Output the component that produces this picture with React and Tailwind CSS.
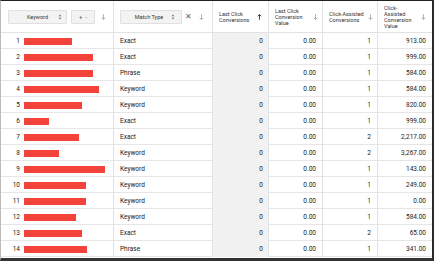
import React from "react";

const rows = [
  [48, "Exact", "0", "0.00", "1", "913.00"],
  [69, "Exact", "0", "0.00", "1", "999.00"],
  [69, "Phrase", "0", "0.00", "1", "584.00"],
  [75, "Keyword", "0", "0.00", "1", "584.00"],
  [58, "Keyword", "0", "0.00", "1", "820.00"],
  [25, "Exact", "0", "0.00", "1", "999.00"],
  [55, "Exact", "0", "0.00", "2", "2,217.00"],
  [35, "Keyword", "0", "0.00", "2", "3,267.00"],
  [81, "Keyword", "0", "0.00", "1", "143.00"],
  [62, "Keyword", "0", "0.00", "1", "249.00"],
  [62, "Keyword", "0", "0.00", "1", "0.00"],
  [52, "Keyword", "0", "0.00", "1", "584.00"],
  [58, "Exact", "0", "0.00", "2", "65.00"],
  [63, "Phrase", "0", "0.00", "1", "341.00"],
];

const Arrow = ({ up = false, dark = false }) => (
  <svg width="5" height="6" viewBox="0 0 5 6" className="shrink-0">
    {up ? (
      <path d="M2.5 0.5 L2.5 5.8 M0.7 2.3 L2.5 0.5 L4.3 2.3" stroke={dark ? "#333" : "#aaa"} strokeWidth="0.9" fill="none" />
    ) : (
      <path d="M2.5 0.2 L2.5 5.5 M0.7 3.7 L2.5 5.5 L4.3 3.7" stroke={dark ? "#333" : "#aaa"} strokeWidth="0.9" fill="none" />
    )}
  </svg>
);

const UpDown = () => (
  <svg width="4" height="6" viewBox="0 0 4 6" className="shrink-0">
    <path d="M0.5 2.3 L2 0.6 L3.5 2.3 Z M0.5 3.7 L2 5.4 L3.5 3.7 Z" fill="#777" />
  </svg>
);

const grid = "grid grid-cols-[112px_99px_56px_54px_55px_55px]";

export default function App() {
  return (
    <div
      className="w-[434px] h-[261px] overflow-hidden bg-white border-t border-t-[#222] border-r-2 border-r-[#2a2a2a] border-b-[3px] border-b-[#333] border-l border-l-[#bbb] text-[#222]"
      style={{ fontFamily: "Roboto, 'Liberation Sans', sans-serif" }}
    >
      <div className={`${grid} h-[32px] border-b border-[#e2e2e2] text-[5.5px] leading-[6px] text-[#333]`}>
        <div className="flex items-center pl-[7px]">
          <div className="w-[59px] h-[14px] bg-[#f3f3f3] border border-[#e0e0e0] rounded-[1px] flex items-center justify-center relative">
            <span>Keyword</span>
            <span className="absolute right-[4px] top-[3.5px]"><UpDown /></span>
          </div>
          <div className="ml-[4px] w-[24px] h-[14px] bg-[#f3f3f3] border border-[#e0e0e0] rounded-[1px] flex items-center justify-center gap-[3px] text-[6px] text-[#555]">
            <span className="text-[#555]">+</span><span className="text-[#555]">-</span>
          </div>
          <div className="ml-[6px]"><Arrow /></div>
        </div>
        <div className="flex items-center pl-[6px] border-l border-[#e2e2e2]">
          <div className="w-[62px] h-[14px] bg-[#f3f3f3] border border-[#e0e0e0] rounded-[1px] flex items-center justify-center relative">
            <span className="-ml-[4px]">Match Type</span>
            <span className="absolute right-[6px] top-[3.5px]"><UpDown /></span>
          </div>
          <span className="ml-[3px] text-[8px] leading-[8px] text-[#666]">✕</span>
          <div className="ml-[7px]"><Arrow /></div>
        </div>
        <div className="flex items-center justify-between pl-[6px] pr-[6px] border-l border-[#e2e2e2]">
          <span>Last Click<br />Conversions</span>
          <Arrow up dark />
        </div>
        <div className="flex items-center justify-between pl-[6px] pr-[4px] border-l border-[#e2e2e2]">
          <span>Last Click<br />Conversion<br />Value</span>
          <Arrow />
        </div>
        <div className="flex items-center justify-between pl-[6px] pr-[4px] border-l border-[#e2e2e2]">
          <span>Click-Assisted<br />Conversions</span>
          <Arrow />
        </div>
        <div className="flex items-center justify-between pl-[6px] pr-[6px] border-l border-[#e2e2e2]">
          <span>Click-<br />Assisted<br />Conversion<br />Value</span>
          <Arrow />
        </div>
      </div>
      {rows.map((r, i) => (
        <div key={i} className={`${grid} h-[16px] border-b border-[#e6e6e6] text-[6.5px] leading-[16px]`}>
          <div className="flex items-center">
            <span className="w-[19px] text-right">{i + 1}</span>
            <div className="ml-[4px] h-[7px] bg-[#f4433b]" style={{ width: r[0] }} />
          </div>
          <div className="pl-[6px] border-l border-[#e2e2e2]">{r[1]}</div>
          <div className="text-right pr-[5px] bg-[#f1f1f1] border-l border-[#e2e2e2]">{r[2]}</div>
          <div className="text-right pr-[6px] border-l border-[#e2e2e2]">{r[3]}</div>
          <div className="text-right pr-[6px] border-l border-[#e2e2e2]">{r[4]}</div>
          <div className="text-right pr-[6px] border-l border-[#e2e2e2]">{r[5]}</div>
        </div>
      ))}
    </div>
  );
}
